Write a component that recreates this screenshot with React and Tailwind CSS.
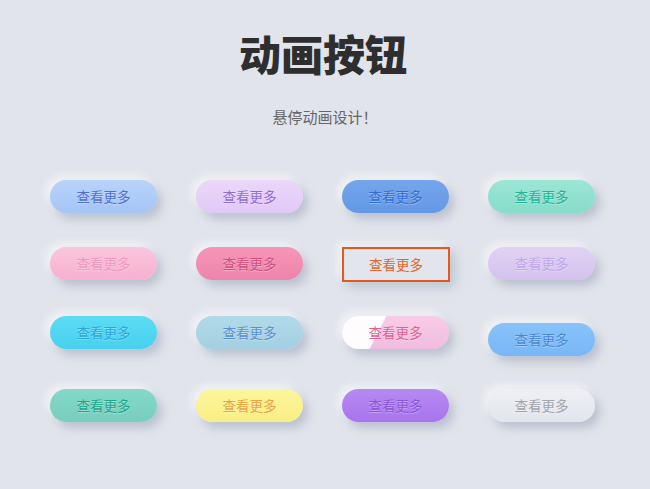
import React from 'react';

const font = { fontFamily: '"Noto Sans CJK SC", "Noto Sans", sans-serif' };

// one pill per cell, row by row
const rows = [
  [
    { bg: 'bg-gradient-to-b from-[#b8d4fa] to-[#a4c4f6]', text: 'text-[#4f6fd8]' },
    { bg: 'bg-gradient-to-b from-[#ecd8fa] to-[#e0c8f6]', text: 'text-[#8f6cdc]' },
    { bg: 'bg-gradient-to-b from-[#74a6ec] to-[#6498e4]', text: 'text-[#2f6fd6]' },
    { bg: 'bg-gradient-to-b from-[#9ce6d6] to-[#86dcca]', text: 'text-[#22b497]' },
  ],
  [
    { bg: 'bg-gradient-to-b from-[#fbc6dc] to-[#f6b0d0]', text: 'text-[#f197bd]' },
    { bg: 'bg-gradient-to-b from-[#f596b8] to-[#ee84aa]', text: 'text-[#d24f7e]' },
    { outline: true },
    { bg: 'bg-gradient-to-b from-[#e0d2f4] to-[#d4c2ee]', text: 'text-[#c2a4e8]' },
  ],
  [
    { bg: 'bg-gradient-to-b from-[#5cdcf4] to-[#46d0ee]', text: 'text-[#2aa6e0]' },
    { bg: 'bg-gradient-to-b from-[#b2dae8] to-[#a2d0e2]', text: 'text-[#5a8fd8]' },
    { bg: 'bg-gradient-to-b from-[#f8cce8] to-[#f0bce0]', text: 'text-[#e2608e]', shine: true },
    { bg: 'bg-gradient-to-b from-[#88c2fa] to-[#78b6f6]', text: 'text-[#4a88d6]', shift: true },
  ],
  [
    { bg: 'bg-gradient-to-b from-[#86d8c8] to-[#76cebe]', text: 'text-[#1fa58c]' },
    { bg: 'bg-gradient-to-b from-[#fcf69c] to-[#faee84]', text: 'text-[#f0a23e]' },
    { bg: 'bg-gradient-to-b from-[#b68af2] to-[#a874ec]', text: 'text-[#8a56d8]' },
    { bg: 'bg-gradient-to-b from-[#eef0f4] to-[#e2e5ec]', text: 'text-[#a2a4ac]' },
  ],
];

function Pill({ b }) {
  if (b.outline) {
    return (
      <div className="w-[108px] h-[35px] border-2 border-[#e8581c] bg-[#e2e5eb] shadow-[5px_5px_10px_rgba(160,170,190,0.55),-4px_-4px_8px_rgba(255,255,255,0.7)] flex items-center justify-center text-[13.5px] text-[#e2652e]">
        查看更多
      </div>
    );
  }
  return (
    <div
      className={`relative overflow-hidden w-[107px] h-[33px] rounded-full ${b.bg} shadow-[5px_6px_10px_rgba(160,170,190,0.6),-4px_-4px_8px_rgba(255,255,255,0.6)] flex items-center justify-center ${b.shift ? 'mt-[7px]' : ''}`}
    >
      {b.shine && (
        <div className="absolute top-0 -left-[20px] w-[56px] h-full bg-white/95 -skew-x-[27deg]" />
      )}
      <span className={`relative text-[13.5px] ${b.text} [text-shadow:0_1px_1px_rgba(255,255,255,0.35)]`}>查看更多</span>
    </div>
  );
}

export default function App() {
  return (
    <div className="min-h-[489px] w-[650px] bg-[#e1e4eb]" style={font}>
      <div className="pt-[24px] text-center">
        <h1 className="text-[42px] leading-[58px] font-black text-[#2e2e2e] -ml-[4px]">动画按钮</h1>
        <p className="mt-[25px] text-[15px] leading-[20px] text-[#666]">悬停动画设计！</p>
      </div>
      <div className="pl-[50px] pt-[53px] flex flex-col">
        {rows.map((row, i) => (
          <div
            key={i}
            className={`grid grid-cols-[107px_107px_107px_107px] gap-x-[39px] items-start ${i === 0 ? '' : i === 3 ? 'mt-[33px]' : 'mt-[34px]'}`}
          >
            {row.map((b, j) => (
              <Pill key={j} b={b} />
            ))}
          </div>
        ))}
      </div>
    </div>
  );
}
